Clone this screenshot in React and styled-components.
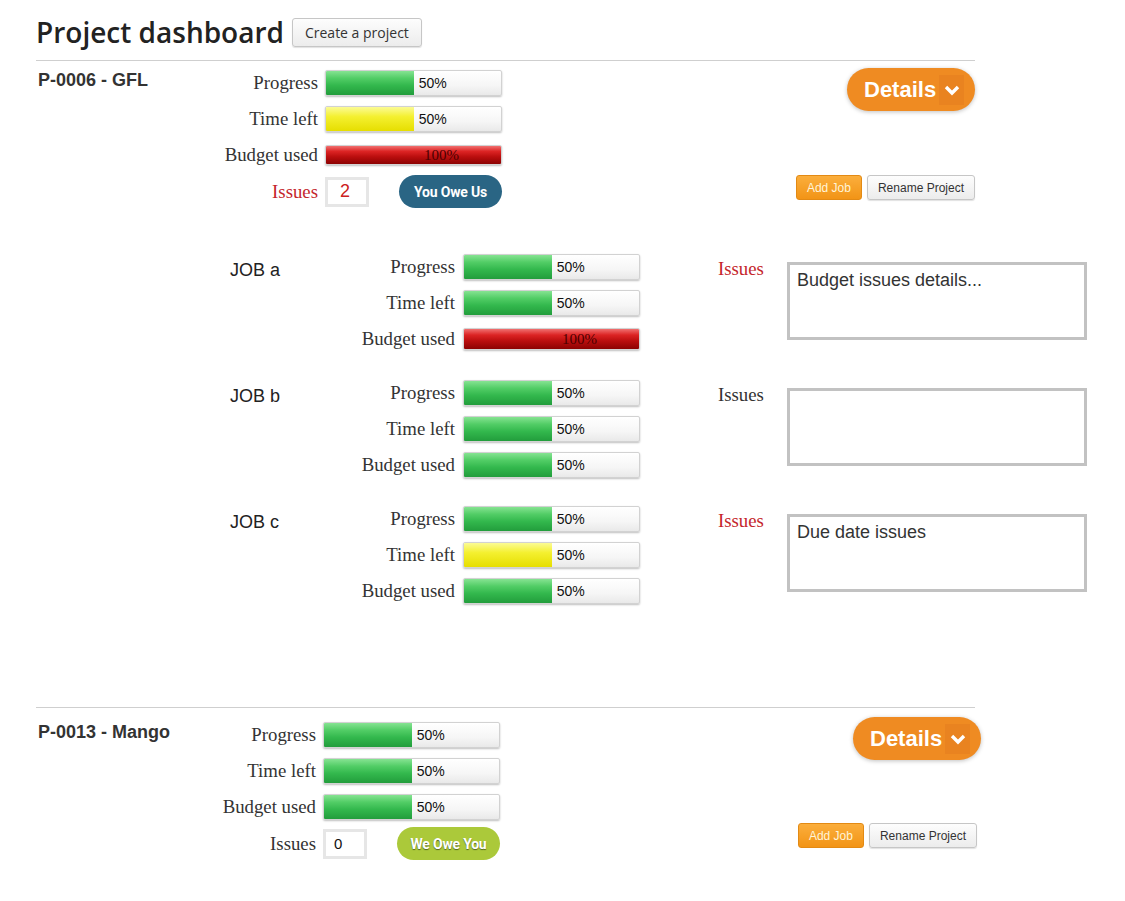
import React from "react";
import styled, { createGlobalStyle } from "styled-components";

const GlobalStyle = createGlobalStyle`
  body {
    margin: 0;
    background: #fff;
    font-family: "Liberation Sans", Arial, sans-serif;
  }
`;

const fills = {
  green: "linear-gradient(to bottom, #86e392 0%, #52cd66 30%, #33b84d 60%, #229d3c 100%)",
  yellow: "linear-gradient(to bottom, #fbfb95 0%, #f4f030 40%, #e6de00 100%)",
  red: "linear-gradient(to bottom, #f07070 0%, #dc2424 30%, #ba0e0e 60%, #8c0202 100%)",
};

const Page = styled.div`
  width: 939px;
  padding: 14px 0 40px 36px;
`;

const Header = styled.div`
  display: flex;
  align-items: center;
  gap: 8px;
  height: 36px;
  margin-bottom: 10px;
`;

const Title = styled.h1`
  margin: 0;
  font-family: "Open Sans", sans-serif;
  font-weight: 600;
  font-size: 28px;
  color: #222;
`;

const GreyButton = styled.button`
  flex-shrink: 0;
  height: ${(p) => p.$h || 25}px;
  padding: 0 ${(p) => p.$px || 10}px;
  border: 1px solid #c6c6c6;
  border-radius: 3px;
  background: linear-gradient(to bottom, #fdfdfd 0%, #ececec 100%);
  box-shadow: 0 1px 1px rgba(0, 0, 0, 0.12);
  font-family: ${(p) => (p.$open ? '"Open Sans", sans-serif' : '"Liberation Sans", Arial, sans-serif')};
  font-size: ${(p) => p.$fs || 12}px;
  color: #333;
`;

const OrangeButton = styled.button`
  height: 25px;
  padding: 0 10px;
  border: 1px solid #e38a14;
  border-radius: 3px;
  background: linear-gradient(to bottom, #fbae3c 0%, #f29416 100%);
  font-family: "Liberation Sans", Arial, sans-serif;
  font-size: 12px;
  color: #fff4d8;
`;

const Project = styled.section`
  border-top: 1px solid #cfcfcf;
  padding: ${(p) => p.$pt}px 0 ${(p) => p.$pb}px;
`;

const TopRow = styled.div`
  display: flex;
  align-items: stretch;
`;

const ProjectName = styled.div`
  width: 160px;
  padding-left: 2px;
  font-weight: bold;
  font-size: 18px;
  color: #333;
  line-height: 18px;
`;

const Metrics = styled.div`
  flex-shrink: 0;
  display: grid;
  grid-template-columns: ${(p) => p.$label}px 177px;
  grid-template-rows: 24px 24px 24px ${(p) => (p.$issues ? "25px" : "")};
  column-gap: ${(p) => p.$gap || 7}px;
  row-gap: 12px;
  align-items: center;
`;

const Label = styled.div`
  text-align: right;
  font-family: "Liberation Serif", "Times New Roman", serif;
  font-size: 18.8px;
  color: ${(p) => (p.$alert ? "#c4262c" : "#333")};
`;

const Track = styled.div`
  position: relative;
  height: ${(p) => (p.$full ? p.$fh : 24)}px;
  border: 1px solid #d2d2d2;
  border-radius: 2px;
  background: linear-gradient(to bottom, #ffffff 0%, #f6f6f6 60%, #e9e9e9 100%);
  box-shadow: 0 1px 2px rgba(0, 0, 0, 0.25);
  overflow: hidden;
`;

const Fill = styled.div`
  height: 100%;
  background: ${(p) => fills[p.$color]};
`;

const Pct = styled.span`
  position: absolute;
  top: 50%;
  left: ${(p) => (p.$full ? "56%" : "53%")};
  transform: translateY(-50%);
  font-family: ${(p) => (p.$full ? '"Liberation Serif", serif' : '"Liberation Sans", Arial, sans-serif')};
  font-size: ${(p) => (p.$full ? 15 : 14)}px;
  color: ${(p) => (p.$full ? "#4a0000" : "#111")};
`;

const IssuesCell = styled.div`
  display: flex;
  align-items: center;
  height: 33px;
`;

const CountBox = styled.div`
  box-sizing: content-box;
  height: 24px;
  border: 3px solid #e6e6e6;
  display: flex;
  align-items: center;
  padding-left: ${(p) => (p.$alert ? 12 : 8)}px;
  width: ${(p) => (p.$alert ? 26 : 30)}px;
  font-size: ${(p) => (p.$alert ? 18 : 15)}px;
  color: ${(p) => (p.$alert ? "#cc2020" : "#111")};
`;

const Pill = styled.div`
  margin-left: 30px;
  width: 103px;
  height: 33px;
  border-radius: 17px;
  display: flex;
  align-items: center;
  justify-content: center;
  background: ${(p) => p.$bg};
  font-family: Roboto, sans-serif;
  font-weight: bold;
  font-size: 14px;
  letter-spacing: -0.2px;
  color: #fff;
  text-shadow: ${(p) => (p.$shadow ? "0 1px 1px rgba(0,0,0,0.5)" : "none")};
`;

const Actions = styled.div`
  margin-left: auto;
  margin-right: ${(p) => p.$mr || 0}px;
  display: flex;
  flex-direction: column;
  align-items: flex-end;
`;

const Details = styled.div`
  margin-top: ${(p) => p.$mt}px;
  margin-right: ${(p) => p.$mr || 0}px;
  width: 128px;
  height: 43px;
  border-radius: 22px;
  background: #ef8b22;
  box-shadow: 0 1px 4px rgba(0, 0, 0, 0.25);
  display: flex;
  align-items: center;
  padding-left: 17px;
  box-sizing: border-box;
  font-weight: bold;
  font-size: 22px;
  color: #fff;
`;

const Chevron = styled.span`
  margin-left: 3px;
  width: 25px;
  height: 30px;
  background: #e98320;
  display: flex;
  align-items: center;
  justify-content: center;
`;

const ButtonRow = styled.div`
  margin-top: auto;
  margin-bottom: ${(p) => p.$mb}px;
  display: flex;
  gap: 5px;
`;

const Jobs = styled.div`
  margin-top: 51px;
  display: flex;
  flex-direction: column;
  gap: 30px;
`;

const JobRow = styled.div`
  display: flex;
  align-items: flex-start;
  width: max-content;
  padding-left: 194px;
`;

const JobName = styled.div`
  width: 105px;
  padding-top: 5px;
  font-size: 18px;
  color: #222;
`;

const IssueLabel = styled(Label)`
  width: 69px;
  margin-left: 78px;
  padding-top: 3px;
  text-align: left;
`;

const IssueText = styled.div`
  margin-top: 7px;
  width: 300px;
  height: 78px;
  box-sizing: border-box;
  border: 3px solid #c2c2c2;
  padding: 5px 7px;
  font-size: 18px;
  color: #333;
`;

function Bar({ color, value, fullHeight }) {
  const full = value === 100;
  return (
    <Track $full={full} $fh={fullHeight}>
      <Fill $color={color} style={{ width: `${value}%` }} />
      <Pct $full={full}>{value}%</Pct>
    </Track>
  );
}

function MetricRows({ rows, fullHeight = 18 }) {
  return rows.map(([name, color, value]) => (
    <React.Fragment key={name}>
      <Label>{name}</Label>
      <Bar color={color} value={value} fullHeight={fullHeight} />
    </React.Fragment>
  ));
}

function DetailsButton({ mt, mr }) {
  return (
    <Details $mt={mt} $mr={mr}>
      Details
      <Chevron>
        <svg width="16" height="12" viewBox="0 0 16 12">
          <polyline points="2,3 8,9 14,3" fill="none" stroke="#fff" strokeWidth="3.4" />
        </svg>
      </Chevron>
    </Details>
  );
}

const jobs = [
  {
    name: "JOB a",
    rows: [["Progress", "green", 50], ["Time left", "green", 50], ["Budget used", "red", 100]],
    alert: true,
    text: "Budget issues details...",
  },
  {
    name: "JOB b",
    rows: [["Progress", "green", 50], ["Time left", "green", 50], ["Budget used", "green", 50]],
    alert: false,
    text: "",
  },
  {
    name: "JOB c",
    rows: [["Progress", "green", 50], ["Time left", "yellow", 50], ["Budget used", "green", 50]],
    alert: true,
    text: "Due date issues",
  },
];

export default function App() {
  return (
    <>
      <GlobalStyle />
      <Page>
        <Header>
          <Title>Project dashboard</Title>
          <GreyButton $h={29} $px={12} $fs={14} $open>Create a project</GreyButton>
        </Header>

        <Project $pt={10} $pb={104}>
          <TopRow>
            <ProjectName>P-0006 - GFL</ProjectName>
            <Metrics $label={120} $issues>
              <MetricRows
                rows={[["Progress", "green", 50], ["Time left", "yellow", 50], ["Budget used", "red", 100]]}
              />
              <Label $alert>Issues</Label>
              <IssuesCell>
                <CountBox $alert>2</CountBox>
                <Pill $bg="#2a6584">You Owe Us</Pill>
              </IssuesCell>
            </Metrics>
            <Actions>
              <DetailsButton mt={-3} />
              <ButtonRow $mb={4}>
                <OrangeButton>Add Job</OrangeButton>
                <GreyButton>Rename Project</GreyButton>
              </ButtonRow>
            </Actions>
          </TopRow>

          <Jobs>
            {jobs.map((job) => (
              <JobRow key={job.name}>
                <JobName>{job.name}</JobName>
                <Metrics $label={120} $gap={8}>
                  <MetricRows rows={job.rows} fullHeight={20} />
                </Metrics>
                <IssueLabel $alert={job.alert}>Issues</IssueLabel>
                <IssueText>{job.text}</IssueText>
              </JobRow>
            ))}
          </Jobs>
        </Project>

        <Project $pt={15} $pb={20}>
          <TopRow>
            <ProjectName>P-0013 - Mango</ProjectName>
            <Metrics $label={118} $issues>
              <MetricRows
                rows={[["Progress", "green", 50], ["Time left", "green", 50], ["Budget used", "green", 50]]}
              />
              <Label>Issues</Label>
              <IssuesCell>
                <CountBox>0</CountBox>
                <Pill $bg="#abc93a" $shadow>We Owe You</Pill>
              </IssuesCell>
            </Metrics>
            <Actions $mr={-2}>
              <DetailsButton mt={-6} mr={-4} />
              <ButtonRow $mb={8}>
                <OrangeButton>Add Job</OrangeButton>
                <GreyButton>Rename Project</GreyButton>
              </ButtonRow>
            </Actions>
          </TopRow>
        </Project>
      </Page>
    </>
  );
}
